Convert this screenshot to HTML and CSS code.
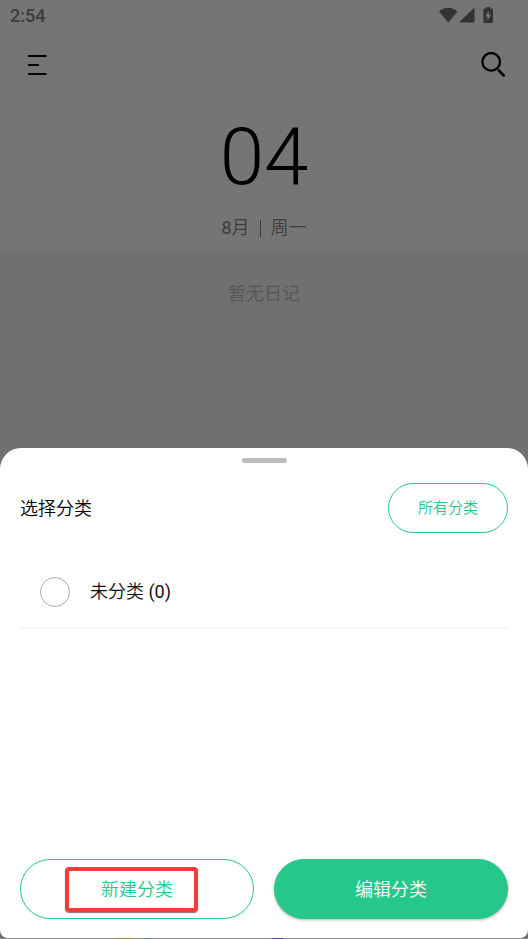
FILE: index.html
```html
<!DOCTYPE html>
<html lang="zh-CN">
<head>
<meta charset="utf-8">
<meta name="viewport" content="width=device-width, initial-scale=1">
<title>选择分类</title>
<link rel="stylesheet" href="styles.css">
</head>
<body>
<div class="screen">
  <div class="diary">
    <div class="diary-top">
      <div class="status">
        <span class="clock">2:54</span>
        <svg class="status-icons" width="56" height="18" viewBox="0 0 56 18" aria-hidden="true">
          <path d="M0 4.500C5.500-.4 13-.4 18.500 4.500L9.250 15.500Z"/>
          <path d="M20 15.500L35.500 .5V15.500Z"/>
          <path fill-rule="evenodd" d="M47.500 -.4h3.600v1.800h1.700q1.200 0 1.200 1.200v12.200q0 1.200-1.200 1.200h-7.200q-1.200 0-1.200-1.200V2.600q0-1.200 1.200-1.200h1.900ZM49.800 4l-3.600 5.400h2.300v4l3.500-5.600h-2.200Z"/>
        </svg>
      </div>
      <header class="toolbar">
        <button class="icon-button" type="button" aria-label="菜单">
          <svg width="20" height="22" viewBox="0 0 20 22"><path d="M0 2H18.500M0 11H11M0 20H18.500" stroke="currentColor" stroke-width="2"/></svg>
        </button>
        <button class="icon-button" type="button" aria-label="搜索">
          <svg width="26" height="26" viewBox="0 0 26 26" fill="none" stroke="currentColor"><circle cx="11.200" cy="9.800" r="8.800" stroke-width="2.300"/><path d="M18.700 18.300L23.700 23.500" stroke-width="2.600" stroke-linecap="round"/></svg>
        </button>
      </header>
      <h1 class="day">04</h1>
      <p class="date"><span><span class="num">8</span>月</span><span class="bar"></span><span>周一</span></p>
    </div>
    <p class="empty">暂无日记</p>
  </div>
  <section class="sheet" role="dialog" aria-labelledby="sheet-title">
    <div class="handle"></div>
    <div class="sheet-head">
      <h2 class="title" id="sheet-title">选择分类</h2>
      <button class="pill pill-small" type="button">所有分类</button>
    </div>
    <label class="option"><input class="radio" type="radio" name="category"><span>未分类 <span class="num">(0)</span></span></label>
    <div class="actions">
      <button class="pill pill-wide" type="button"><span class="marked">新建分类</span></button>
      <button class="pill pill-filled" type="button">编辑分类</button>
    </div>
  </section>
</div>
</body>
</html>
```
FILE: styles.css
```css
* { box-sizing: border-box; }
body {
  margin: 0;
  background: #707070;
  color: #000;
  font: 350 18px/24px Roboto, "Noto Sans CJK SC", sans-serif;
}
h1, h2, p { margin: 0; font-weight: inherit; }
button { font: inherit; cursor: pointer; }
svg { display: block; }
.num { font-weight: 400; }

.screen {
  display: grid;
  min-height: 100vh;
  background: linear-gradient(90deg, #908f8f 117px, #a09028 117px 132px, #908f8f 132px 144px, #6d8298 144px 150px, #908f8f 150px 272px, #4a50a0 272px 283px, #908f8f 283px);
}
.diary, .sheet { grid-area: 1 / 1; margin-bottom: 1px; }
.diary { text-align: center; background: #707070; }
.diary-top { height: 253px; background: #757575; }
.status {
  display: flex;
  justify-content: space-between;
  align-items: center;
  height: 32px;
  padding: 0 33px 0 10px;
}
.clock { font-weight: 500; color: #3c3c3c; }
.status-icons { fill: #333; }
.toolbar {
  display: flex;
  justify-content: space-between;
  align-items: center;
  height: 66px;
  padding: 0 22px 0 28px;
}
.icon-button { padding: 0; border: 0; background: none; color: #000; }
.day { font-size: 80px; font-weight: 300; line-height: 118px; }
.date {
  display: flex;
  justify-content: center;
  align-items: center;
  gap: 10px;
  color: #3c3c3c;
}
.bar { width: 1px; height: 17px; background: #3c3c3c; }
.empty { padding-top: 29px; color: #555; }

.sheet {
  align-self: end;
  display: flex;
  flex-direction: column;
  min-height: 490px;
  padding: 10px 20px 19px;
  background: #fff;
  border-radius: 21px 21px 8px 8px;
}
.handle {
  align-self: center;
  width: 45px;
  height: 5px;
  border-radius: 3px;
  background: #bdbdbd;
}
.sheet-head {
  display: flex;
  justify-content: space-between;
  align-items: center;
  margin-top: 20px;
}
.title { padding-top: 1px; font-size: 18px; }
.pill {
  height: 60px;
  padding: 0;
  border: 1px solid #26c78b;
  border-radius: 30px;
  background: #fff;
  color: #26c78b;
}
.pill-small { width: 120px; height: 50px; font-size: 15px; }
.pill-filled {
  padding-top: 1px;
  background: #26c78b;
  color: #fff;
  box-shadow: 0 1px 3px rgb(0 0 0 / 30%);
}
.option {
  display: flex;
  align-items: center;
  gap: 20px;
  height: 96px;
  padding: 24px 20px 0;
  border-bottom: 2px solid #f7f7f7;
  color: #111;
}
.radio {
  appearance: none;
  width: 30px;
  height: 30px;
  margin: 0;
  border: 1px solid #aaa;
  border-radius: 50%;
}
.radio:checked { background: #26c78b; }
.actions {
  display: grid;
  grid-template-columns: 1fr 1fr;
  gap: 20px;
  margin-top: auto;
}
.pill-wide { display: flex; justify-content: center; align-items: center; }
.marked {
  padding: 7px 21px 6px 32px;
  margin-right: 11px;
  border: 4px solid #f43b3b;
  border-radius: 4px;
  box-shadow: 0 1px 1px #777;
}
```
